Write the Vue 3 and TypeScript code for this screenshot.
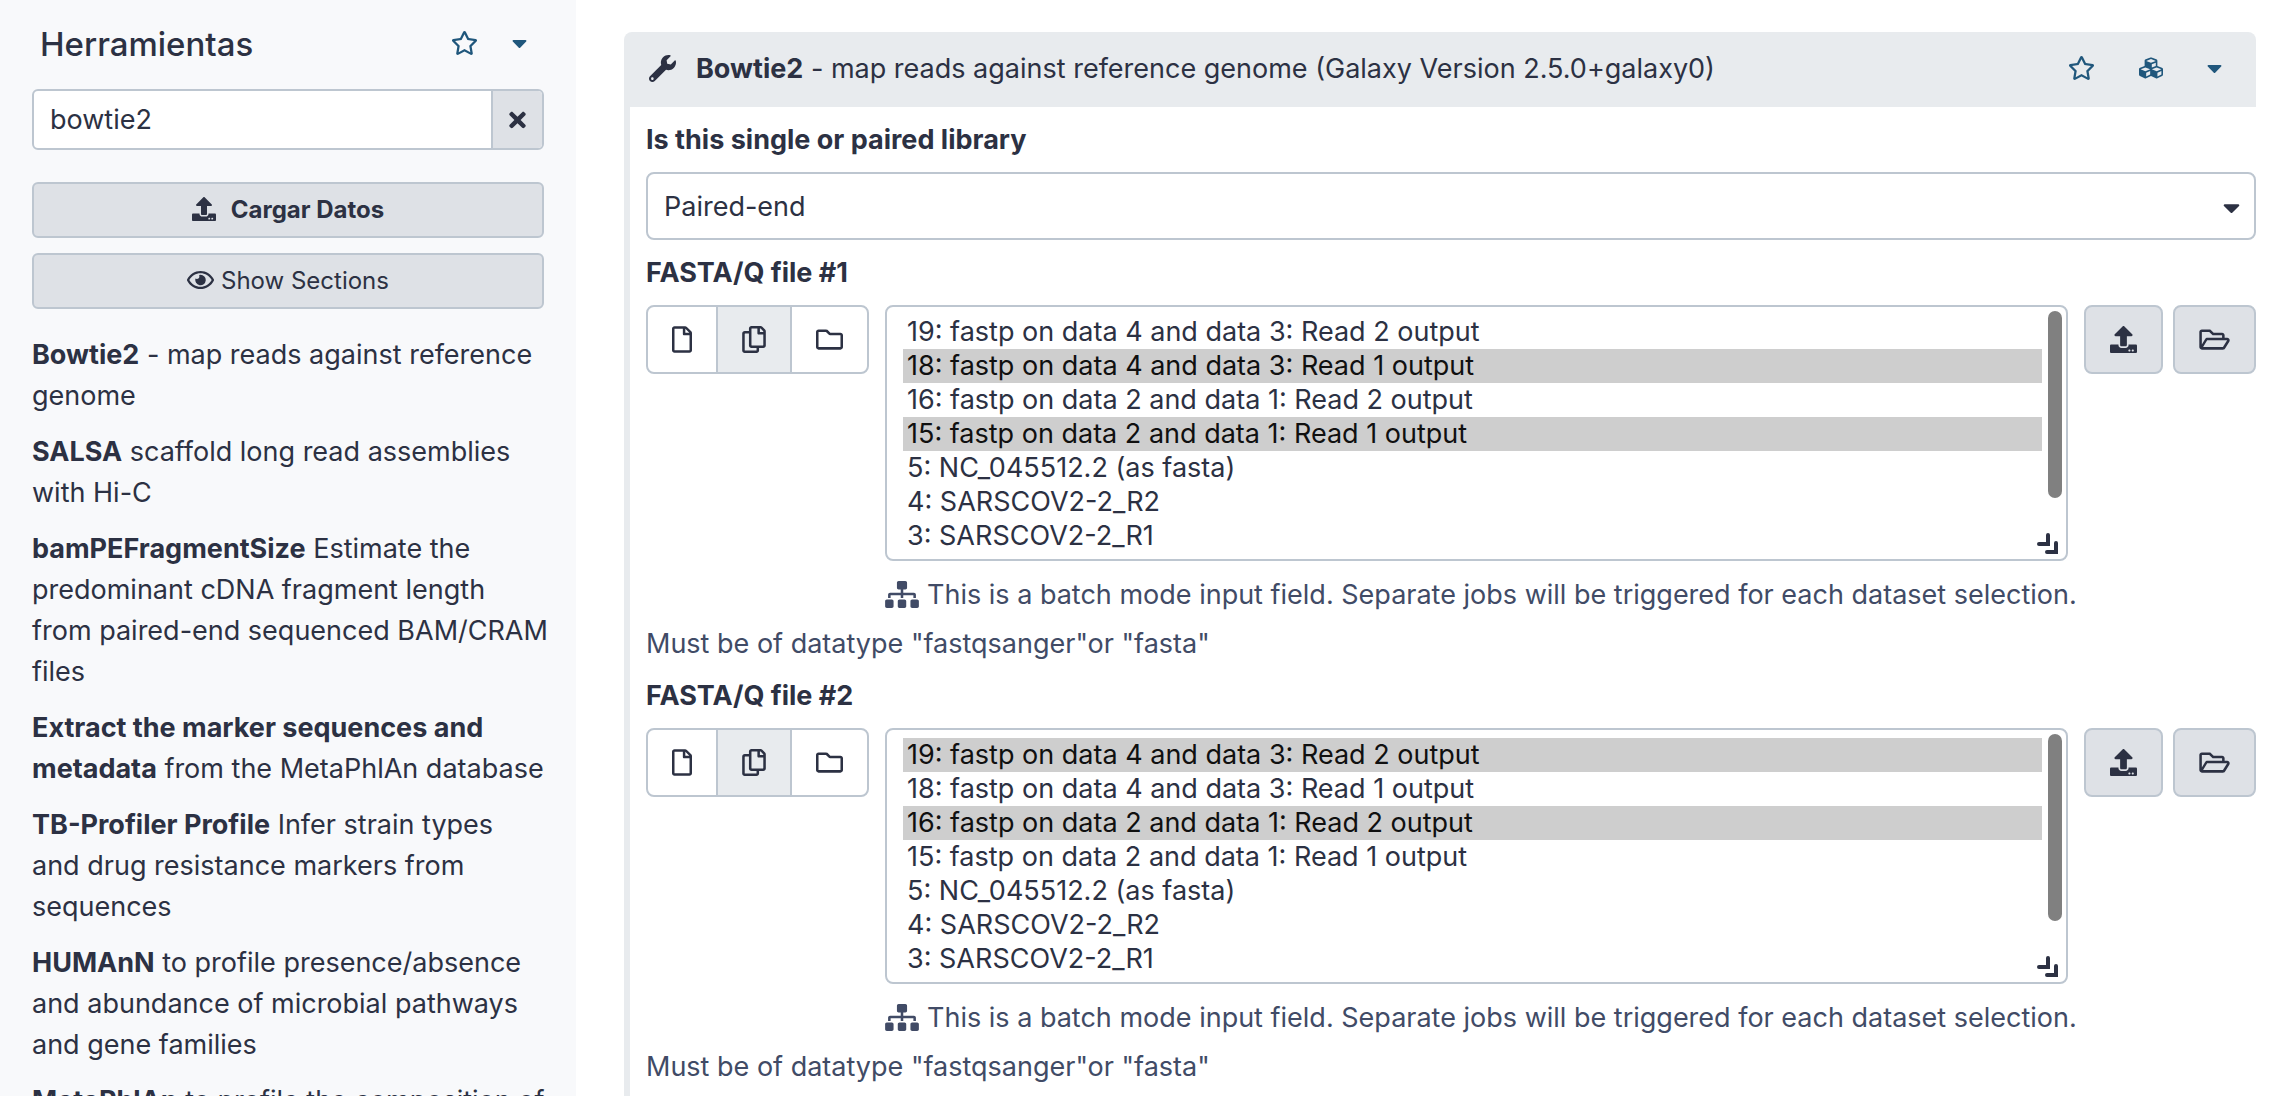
<script setup lang="ts">
import { ref } from 'vue'

interface Glyph {
  box: string
  width: number
  height: number
  path: string
}

interface Tool {
  name: string
  description: string
}

interface FileField {
  id: string
  label: string
  selected: string[]
}

const glyphs: Record<string, Glyph> = {
  star: {
    box: '0 0 576 512',
    width: 27,
    height: 24,
    path: 'M528.1 171.5L382 150.2 316.7 17.8c-11.7-23.6-45.6-23.9-57.4 0L194 150.2 47.9 171.5c-26.2 3.8-36.7 36.1-17.7 54.6l105.7 103-25 145.5c-4.5 26.3 23.2 46 46.4 33.7L288 439.6l130.7 68.7c23.2 12.2 50.9-7.4 46.4-33.7l-25-145.5 105.7-103c19-18.5 8.5-50.8-17.7-54.6zM388.6 312.3l23.7 138.4L288 385.4l-124.3 65.3 23.7-138.4-100.6-98 139-20.2 62.2-126 62.2 126 139 20.2-100.6 98z',
  },
  caret: {
    box: '0 0 320 512',
    width: 15,
    height: 24,
    path: 'M31.3 192h257.3c17.8 0 26.7 21.5 14.1 34.1L174.1 354.8c-7.8 7.8-20.5 7.8-28.3 0L17.2 226.1C4.6 213.5 13.5 192 31.3 192z',
  },
  times: {
    box: '0 0 352 512',
    width: 17,
    height: 24,
    path: 'M242.72 256l100.07-100.07c12.28-12.28 12.28-32.19 0-44.48l-22.24-22.24c-12.28-12.28-32.19-12.28-44.48 0L176 189.28 75.93 89.21c-12.28-12.28-32.19-12.28-44.48 0L9.21 111.45c-12.28 12.28-12.28 32.19 0 44.48L109.28 256 9.21 356.07c-12.28 12.28-12.28 32.19 0 44.48l22.24 22.24c12.28 12.28 32.2 12.28 44.48 0L176 322.72l100.07 100.07c12.28 12.28 32.2 12.28 44.48 0l22.24-22.24c12.28-12.28 12.28-32.19 0-44.48L242.72 256z',
  },
  upload: {
    box: '0 0 512 512',
    width: 24,
    height: 24,
    path: 'M296 384h-80c-13.3 0-24-10.7-24-24V192h-87.7c-17.8 0-26.7-21.5-14.1-34.1L242.3 5.7c7.5-7.5 19.8-7.5 27.3 0l152.2 152.2c12.6 12.6 3.7 34.1-14.1 34.1H320v168c0 13.3-10.7 24-24 24zm216-8v112c0 13.3-10.7 24-24 24H24c-13.3 0-24-10.7-24-24V376c0-13.3 10.7-24 24-24h136v8c0 30.9 25.1 56 56 56h80c30.9 0 56-25.1 56-56v-8h136c13.3 0 24 10.7 24 24zm-124 88c0-11-9-20-20-20s-20 9-20 20 9 20 20 20 20-9 20-20zm64 0c0-11-9-20-20-20s-20 9-20 20 9 20 20 20 20-9 20-20z',
  },
  eye: {
    box: '0 0 576 512',
    width: 27,
    height: 24,
    path: 'M288 144a110.94 110.94 0 0 0-31.24 5 55.4 55.4 0 0 1 7.24 27 56 56 0 0 1-56 56 55.4 55.4 0 0 1-27-7.24A111.71 111.71 0 1 0 288 144zm284.52 97.4C518.29 135.59 410.93 64 288 64S57.68 135.64 3.48 241.41a32.35 32.35 0 0 0 0 29.19C57.71 376.41 165.07 448 288 448s230.32-71.64 284.52-177.41a32.35 32.35 0 0 0 0-29.19zM288 400c-98.65 0-189.09-55-237.93-144C98.91 167 189.34 112 288 112s189.09 55 237.93 144C477.1 345 386.66 400 288 400z',
  },
  wrench: {
    box: '0 0 512 512',
    width: 27,
    height: 27,
    path: 'M507.73 109.1c-2.24-9.03-13.54-12.09-20.12-5.51l-74.36 74.36-67.88-11.31-11.31-67.88 74.36-74.36c6.62-6.62 3.43-17.9-5.66-20.16-47.38-11.74-99.55.91-136.58 37.93-39.64 39.64-50.55 97.1-34.05 147.2L18.74 402.76c-24.99 24.99-24.99 65.51 0 90.5 24.99 24.99 65.51 24.99 90.5 0l213.21-213.21c50.12 16.71 107.47 5.68 147.37-34.22 37.07-37.07 49.7-89.32 37.91-136.73zM64 472c-13.25 0-24-10.75-24-24 0-13.26 10.75-24 24-24s24 10.74 24 24c0 13.25-10.75 24-24 24z',
  },
  cubes: {
    box: '0 0 512 512',
    width: 24,
    height: 24,
    path: 'M488.6 250.2L392 214V105.5c0-15-9.3-28.4-23.4-33.7l-100-37.5c-8.1-3.1-17.1-3.1-25.3 0l-100 37.5c-14.1 5.3-23.4 18.7-23.4 33.7V214l-96.6 36.2C9.3 255.5 0 268.9 0 283.9V394c0 13.6 7.7 26.1 19.9 32.2l100 50c10.1 5.1 22.1 5.1 32.2 0l103.9-52 103.9 52c10.1 5.1 22.1 5.1 32.2 0l100-50c12.2-6.1 19.9-18.6 19.9-32.2V283.9c0-15-9.3-28.4-23.4-33.7zM358 214.8l-85 31.9v-68.2l85-37v73.3zM154 104.1l102-38.2 102 38.2v.6l-102 41.4-102-41.4v-.6zm84 291.1l-85 42.5v-79.1l85-38.8v75.4zm0-112l-102 41.4-102-41.4v-.6l102-38.2 102 38.2v.6zm240 112l-85 42.5v-79.1l85-38.8v75.4zm0-112l-102 41.4-102-41.4v-.6l102-38.2 102 38.2v.6z',
  },
  selectCaret: {
    box: '0 0 320 512',
    width: 17,
    height: 27,
    path: 'M31.3 192h257.3c17.8 0 26.7 21.5 14.1 34.1L174.1 354.8c-7.8 7.8-20.5 7.8-28.3 0L17.2 226.1C4.6 213.5 13.5 192 31.3 192z',
  },
  file: {
    box: '0 0 384 512',
    width: 20,
    height: 27,
    path: 'M369.9 97.9L286 14C277 5 264.8-.1 252.1-.1H48C21.5 0 0 21.5 0 48v416c0 26.5 21.5 48 48 48h288c26.5 0 48-21.5 48-48V131.9c0-12.7-5.1-25-14.1-34zM332.1 128H256V51.9l76.1 76.1zM48 464V48h160v104c0 13.3 10.7 24 24 24h104v288H48z',
  },
  copy: {
    box: '0 0 448 512',
    width: 24,
    height: 27,
    path: 'M433.941 65.941l-51.882-51.882A48 48 0 0 0 348.118 0H176c-26.51 0-48 21.49-48 48v48H48c-26.51 0-48 21.49-48 48v320c0 26.51 21.49 48 48 48h224c26.51 0 48-21.49 48-48v-48h80c26.51 0 48-21.49 48-48V99.882a48 48 0 0 0-14.059-33.941zM266 464H54a6 6 0 0 1-6-6V150a6 6 0 0 1 6-6h74v224c0 26.51 21.49 48 48 48h96v42a6 6 0 0 1-6 6zm128-96H182a6 6 0 0 1-6-6V54a6 6 0 0 1 6-6h106v88c0 13.255 10.745 24 24 24h88v202a6 6 0 0 1-6 6zm6-256h-64V48h9.632c1.591 0 3.117.632 4.243 1.757l48.368 48.368a6 6 0 0 1 1.757 4.243V112z',
  },
  folder: {
    box: '0 0 512 512',
    width: 27,
    height: 27,
    path: 'M464 128H272l-54.63-54.63c-6-6-14.14-9.37-22.63-9.37H48C21.49 64 0 85.49 0 112v288c0 26.51 21.49 48 48 48h416c26.51 0 48-21.49 48-48V176c0-26.51-21.49-48-48-48zm0 272H48V112h140.12l54.63 54.63c6 6 14.14 9.37 22.63 9.37H464v224z',
  },
  uploadLarge: {
    box: '0 0 512 512',
    width: 27,
    height: 27,
    path: 'M296 384h-80c-13.3 0-24-10.7-24-24V192h-87.7c-17.8 0-26.7-21.5-14.1-34.1L242.3 5.7c7.5-7.5 19.8-7.5 27.3 0l152.2 152.2c12.6 12.6 3.7 34.1-14.1 34.1H320v168c0 13.3-10.7 24-24 24zm216-8v112c0 13.3-10.7 24-24 24H24c-13.3 0-24-10.7-24-24V376c0-13.3 10.7-24 24-24h136v8c0 30.9 25.1 56 56 56h80c30.9 0 56-25.1 56-56v-8h136c13.3 0 24 10.7 24 24zm-124 88c0-11-9-20-20-20s-20 9-20 20 9 20 20 20 20-9 20-20zm64 0c0-11-9-20-20-20s-20 9-20 20 9 20 20 20 20-9 20-20z',
  },
  folderOpen: {
    box: '0 0 576 512',
    width: 31,
    height: 27,
    path: 'M527.9 224H480v-48c0-26.5-21.5-48-48-48H272l-64-64H48C21.5 64 0 85.5 0 112v288c0 26.5 21.5 48 48 48h400c16.5 0 31.9-8.5 40.7-22.6l79.9-128c20-31.9-3-73.4-40.7-73.4zM48 118c0-3.3 2.7-6 6-6h134.1l64 64H426c3.3 0 6 2.7 6 6v42H152c-16.8 0-32.4 8.8-41.1 23.2L48 351.4zm400 282H72l77.2-128H528z',
  },
  sitemap: {
    box: '0 0 640 512',
    width: 34,
    height: 27,
    path: 'M128 352H32c-17.67 0-32 14.33-32 32v96c0 17.67 14.33 32 32 32h96c17.67 0 32-14.33 32-32v-96c0-17.67-14.33-32-32-32zm-24-80h192v48h48v-48h192v48h48v-57.59c0-21.17-17.23-38.41-38.41-38.41H344v-64h40c17.67 0 32-14.33 32-32V32c0-17.67-14.33-32-32-32H256c-17.67 0-32 14.33-32 32v96c0 17.67 14.33 32 32 32h40v64H94.41C73.23 224 56 241.23 56 262.41V320h48v-48zm264 80h-96c-17.67 0-32 14.33-32 32v96c0 17.67 14.33 32 32 32h96c17.67 0 32-14.33 32-32v-96c0-17.67-14.33-32-32-32zm240 0h-96c-17.67 0-32 14.33-32 32v96c0 17.67 14.33 32 32 32h96c17.67 0 32-14.33 32-32v-96c0-17.67-14.33-32-32-32z',
  },
}

const query = ref('bowtie2')
const library = ref('Paired-end')

const tools: Tool[] = [
  { name: 'Bowtie2', description: '- map reads against reference genome' },
  { name: 'SALSA', description: 'scaffold long read assemblies with Hi-C' },
  {
    name: 'bamPEFragmentSize',
    description: 'Estimate the predominant cDNA fragment length from paired-end sequenced BAM/CRAM files',
  },
  { name: 'Extract the marker sequences and metadata', description: 'from the MetaPhlAn database' },
  { name: 'TB-Profiler Profile', description: 'Infer strain types and drug resistance markers from sequences' },
  {
    name: 'HUMAnN',
    description: 'to profile presence/absence and abundance of microbial pathways and gene families',
  },
  { name: 'MetaPhlAn', description: 'to profile the composition of' },
]

const datasets: string[] = [
  '19: fastp on data 4 and data 3: Read 2 output',
  '18: fastp on data 4 and data 3: Read 1 output',
  '16: fastp on data 2 and data 1: Read 2 output',
  '15: fastp on data 2 and data 1: Read 1 output',
  '5: NC_045512.2 (as fasta)',
  '4: SARSCOV2-2_R2',
  '3: SARSCOV2-2_R1',
]

const fields = ref<FileField[]>([
  { id: 'reads-1', label: 'FASTA/Q file #1', selected: [datasets[1], datasets[3]] },
  { id: 'reads-2', label: 'FASTA/Q file #2', selected: [datasets[0], datasets[2]] },
])

const sources = ['file', 'copy', 'folder']
const sourceLabels: Record<string, string> = {
  file: 'Single dataset',
  copy: 'Multiple datasets',
  folder: 'Dataset collection',
}
</script>

<template>
  <div class="page">
    <aside class="sidebar">
      <header class="sidebar-head">
        <h2>Herramientas</h2>
        <div class="panel-links">
          <button class="link" type="button" aria-label="Favorites">
            <svg :viewBox="glyphs.star.box" :width="glyphs.star.width" :height="glyphs.star.height"><path :d="glyphs.star.path" /></svg>
          </button>
          <button class="link" type="button" aria-label="Panel views">
            <svg :viewBox="glyphs.caret.box" :width="glyphs.caret.width" :height="glyphs.caret.height"><path :d="glyphs.caret.path" /></svg>
          </button>
        </div>
      </header>

      <div class="search">
        <input v-model="query" type="text" aria-label="Search tools" />
        <button type="button" aria-label="Clear search" @click="query = ''">
          <svg :viewBox="glyphs.times.box" :width="glyphs.times.width" :height="glyphs.times.height"><path :d="glyphs.times.path" /></svg>
        </button>
      </div>

      <div class="actions">
        <button class="upload" type="button">
          <svg :viewBox="glyphs.upload.box" :width="glyphs.upload.width" :height="glyphs.upload.height"><path :d="glyphs.upload.path" /></svg>
          <span>Cargar Datos</span>
        </button>
        <button type="button">
          <svg :viewBox="glyphs.eye.box" :width="glyphs.eye.width" :height="glyphs.eye.height"><path :d="glyphs.eye.path" /></svg>
          <span>Show Sections</span>
        </button>
      </div>

      <nav class="tools">
        <a v-for="tool in tools" :key="tool.name" href="#"><b>{{ tool.name }}</b> {{ tool.description }}</a>
      </nav>
    </aside>

    <main>
      <header class="tool-head">
        <svg class="wrench" :viewBox="glyphs.wrench.box" :width="glyphs.wrench.width" :height="glyphs.wrench.height"><path :d="glyphs.wrench.path" /></svg>
        <h1><b>Bowtie2</b> - map reads against reference genome (Galaxy Version 2.5.0+galaxy0)</h1>
        <div class="tool-links">
          <button class="link" type="button" aria-label="Add to favorites">
            <svg :viewBox="glyphs.star.box" :width="glyphs.star.width" :height="glyphs.star.height"><path :d="glyphs.star.path" /></svg>
          </button>
          <button class="link" type="button" aria-label="Versions">
            <svg :viewBox="glyphs.cubes.box" :width="glyphs.cubes.width" :height="glyphs.cubes.height"><path :d="glyphs.cubes.path" /></svg>
          </button>
          <button class="link" type="button" aria-label="Options">
            <svg :viewBox="glyphs.caret.box" :width="glyphs.caret.width" :height="glyphs.caret.height"><path :d="glyphs.caret.path" /></svg>
          </button>
        </div>
      </header>

      <form class="tool-body" @submit.prevent>
        <label class="title" for="library">Is this single or paired library</label>
        <div class="dropdown">
          <select id="library" v-model="library">
            <option>Paired-end</option>
          </select>
          <svg :viewBox="glyphs.selectCaret.box" :width="glyphs.selectCaret.width" :height="glyphs.selectCaret.height"><path :d="glyphs.selectCaret.path" /></svg>
        </div>

        <section v-for="field in fields" :key="field.id" class="field">
          <label class="title" :for="field.id">{{ field.label }}</label>
          <div class="row">
            <div class="group">
              <button
                v-for="source in sources"
                :key="source"
                type="button"
                :class="{ active: source === 'copy' }"
                :aria-label="sourceLabels[source]"
              >
                <svg :viewBox="glyphs[source].box" :width="glyphs[source].width" :height="glyphs[source].height"><path :d="glyphs[source].path" /></svg>
              </button>
            </div>
            <div class="choice">
              <div class="list">
                <select :id="field.id" v-model="field.selected" multiple>
                  <option v-for="dataset in datasets" :key="dataset" :value="dataset">{{ dataset }}</option>
                </select>
                <span class="thumb"></span>
                <svg class="grip" viewBox="0 0 21 21" width="21" height="21"><path d="M11 2v9H2M19 10v9h-9" /></svg>
              </div>
              <p class="batch">
                <svg :viewBox="glyphs.sitemap.box" :width="glyphs.sitemap.width" :height="glyphs.sitemap.height"><path :d="glyphs.sitemap.path" /></svg>
                <span>This is a batch mode input field. Separate jobs will be triggered for each dataset selection.</span>
              </p>
            </div>
            <div class="sources">
              <button type="button" aria-label="Upload dataset">
                <svg :viewBox="glyphs.uploadLarge.box" :width="glyphs.uploadLarge.width" :height="glyphs.uploadLarge.height"><path :d="glyphs.uploadLarge.path" /></svg>
              </button>
              <button type="button" aria-label="Browse datasets">
                <svg :viewBox="glyphs.folderOpen.box" :width="glyphs.folderOpen.width" :height="glyphs.folderOpen.height"><path :d="glyphs.folderOpen.path" /></svg>
              </button>
            </div>
          </div>
          <p class="hint">Must be of datatype "fastqsanger"or "fasta"</p>
        </section>
      </form>
    </main>
  </div>
</template>

<style>
body {
  margin: 0;
}
</style>

<style scoped>
.page {
  display: flex;
  height: 100vh;
  overflow: hidden;
  background: #ffffff;
  color: #2c3143;
  font: 27px/41px Inter, 'Liberation Sans', sans-serif;
}

.page * {
  box-sizing: border-box;
}

h1,
h2,
p {
  margin: 0;
}

b {
  font-weight: 700;
}

svg {
  display: block;
  flex: none;
  fill: currentColor;
}

button,
input,
select {
  margin: 0;
  padding: 0;
  border: 0;
  outline: 0;
  background: none;
  color: inherit;
  font: inherit;
}

button {
  display: flex;
  align-items: center;
  justify-content: center;
}

.link {
  color: #20577c;
}

.sidebar {
  flex: none;
  width: 576px;
  padding: 24px 32px 0;
  background: #f8f9fb;
}

.sidebar-head {
  display: flex;
  align-items: center;
  margin-bottom: 24px;
  padding: 0 17px 0 8px;
}

.sidebar-head h2 {
  flex: 1;
  font-size: 33px;
  font-weight: 500;
}

.panel-links {
  display: flex;
  gap: 34px;
  padding-bottom: 3px;
}

.search {
  display: flex;
  height: 61px;
  margin-bottom: 32px;
  overflow: hidden;
  border: 2px solid #bdc6d0;
  border-radius: 6px;
  background: #ffffff;
}

.search input {
  flex: 1;
  min-width: 0;
  padding: 0 16px;
}

.search button {
  width: 51px;
  border-left: 2px solid #bdc6d0;
  background: #dee1e6;
}

.actions {
  display: flex;
  flex-direction: column;
  gap: 15px;
  margin-bottom: 25px;
}

.actions button {
  gap: 7px;
  height: 56px;
  padding-bottom: 2px;
  border: 2px solid #bdc6d0;
  border-radius: 6px;
  background: #dee1e6;
  font-size: 24px;
}

.actions .upload {
  gap: 15px;
  font-weight: 700;
}

.tools {
  display: flex;
  flex-direction: column;
  gap: 15px;
  margin-right: -4px;
}

.tools a {
  color: inherit;
  text-decoration: none;
}

main {
  display: flex;
  flex: 1;
  flex-direction: column;
  min-width: 0;
  padding: 32px 30px 0 48px;
}

.tool-head {
  display: flex;
  flex: none;
  align-items: center;
  height: 75px;
  padding: 0 34px 3px 25px;
  border-radius: 8px 8px 0 0;
  background: #e8ebee;
}

.wrench {
  margin-right: 20px;
}

.tool-head h1 {
  flex: 1;
  font-size: 27px;
  font-weight: 400;
}

.tool-links {
  display: flex;
  gap: 44px;
}

.tool-body {
  flex: 1;
  padding: 12px 0 0 16px;
  border-left: 6px solid #e8ebee;
}

.title {
  display: block;
  margin-bottom: 12px;
  font-weight: 700;
}

.dropdown {
  position: relative;
  height: 68px;
  margin-bottom: 12px;
}

.dropdown select {
  width: 100%;
  height: 100%;
  padding: 0 16px;
  border: 2px solid #bdc6d0;
  border-radius: 8px;
  background: #ffffff;
  appearance: none;
}

.dropdown svg {
  position: absolute;
  top: 22px;
  right: 16px;
  pointer-events: none;
}

.field {
  margin-bottom: 11px;
}

.row {
  display: flex;
  align-items: flex-start;
  gap: 16px;
}

.group {
  display: flex;
  width: 223px;
  height: 69px;
  overflow: hidden;
  border: 2px solid #bdc6d0;
  border-radius: 8px;
}

.group button {
  flex: auto;
  padding: 0 24px;
}

.group button + button {
  border-left: 2px solid #bdc6d0;
}

.group .active {
  background: #e8ebee;
}

.choice {
  flex: 1;
  min-width: 0;
}

.list {
  position: relative;
  height: 256px;
}

.list select {
  display: block;
  width: 100%;
  height: 100%;
  padding: 8px 24px 8px 16px;
  overflow: hidden;
  border: 2px solid #bdc6d0;
  border-radius: 8px;
  background: #ffffff;
}

.list option {
  height: 34px;
  padding: 0 4px;
  line-height: 34px;
}

.list option:checked {
  background: #cecece linear-gradient(#cecece, #cecece);
  color: #101010;
}

.thumb {
  position: absolute;
  top: 6px;
  right: 6px;
  width: 14px;
  height: 187px;
  border-radius: 7px;
  background: #808080;
}

.grip {
  position: absolute;
  right: 10px;
  bottom: 7px;
  fill: none;
  stroke: currentColor;
  stroke-width: 4;
  stroke-linecap: round;
}

.batch {
  display: flex;
  align-items: center;
  gap: 8px;
  margin: 13px 0 8px;
  color: #414b66;
  white-space: nowrap;
}

.sources {
  display: flex;
  gap: 10px;
}

.sources button {
  height: 69px;
  padding: 0 24px;
  border: 2px solid #bdc6d0;
  border-radius: 8px;
  background: #dee1e6;
}

.hint {
  color: #414b66;
}
</style>
